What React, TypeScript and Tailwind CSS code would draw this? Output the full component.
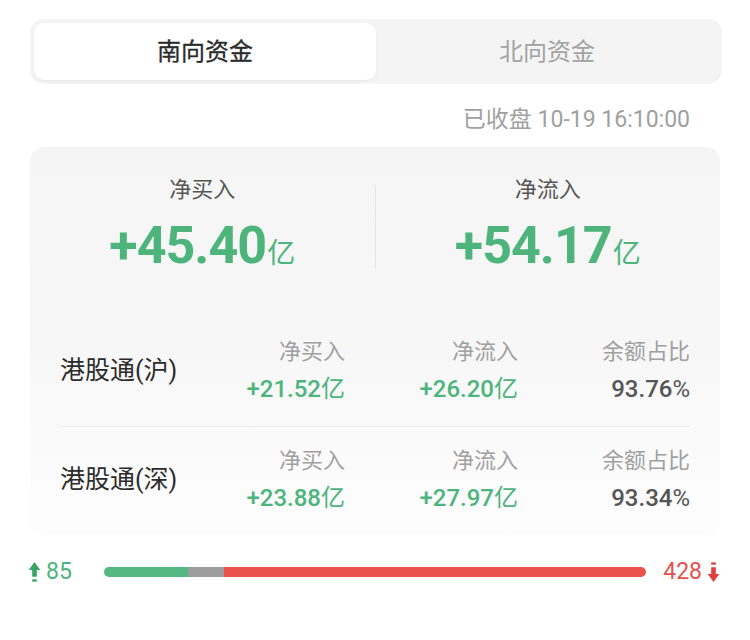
import React from 'react';

const cjk = "font-['Roboto','Noto_Sans_CJK_SC',sans-serif]";

const rows = [
  { name: '港股通(沪)', buy: '+21.52', flow: '+26.20', ratio: '93.76' },
  { name: '港股通(深)', buy: '+23.88', flow: '+27.97', ratio: '93.34' },
];

const UpArrow = () => (
  <svg width="13" height="22" viewBox="0 0 12 21" className="text-[#3aa366]">
    <path d="M6 1 L11.5 8.5 L8.2 8.5 L8.2 15 L3.8 15 L3.8 8.5 L0.5 8.5 Z" fill="currentColor" />
    <rect x="3.8" y="17.5" width="4.4" height="2.2" fill="currentColor" />
  </svg>
);

const DownArrow = () => (
  <svg width="13" height="22" viewBox="0 0 12 21" className="text-[#e23c3c]">
    <rect x="3.8" y="1.3" width="4.4" height="2.2" fill="currentColor" />
    <path d="M6 20 L11.5 12.5 L8.2 12.5 L8.2 6 L3.8 6 L3.8 12.5 L0.5 12.5 Z" fill="currentColor" />
  </svg>
);

export default function App() {
  return (
    <div className={`w-[750px] h-[640px] bg-white overflow-hidden ${cjk}`}>
      {/* Tabs */}
      <div className="ml-[30px] mr-[28px] mt-[19px] h-[65px] rounded-[14px] bg-[#f4f4f4] p-[4px] flex">
        <div className="flex-1 bg-white rounded-[10px] shadow-[0_1px_3px_rgba(0,0,0,0.06)] flex items-center justify-center text-[24px] text-[#2b2b2b] [-webkit-text-stroke:0.3px_#2b2b2b]">
          南向资金
        </div>
        <div className="flex-1 flex items-center justify-center text-[24px] text-[#a3a3a3]">
          北向资金
        </div>
      </div>

      {/* Timestamp */}
      <div className="mt-[22px] pr-[60px] text-right text-[23px] leading-[28px] text-[#a0a0a0]">
        已收盘 10-19 16:10:00
      </div>

      {/* Card */}
      <div className="mx-[30px] mt-[13px] rounded-[14px] bg-gradient-to-b from-[#f5f5f5] via-[#f7f7f7] to-[#fdfdfd]">
        {/* Summary */}
        <div className="flex pt-[29px] pb-[44px]">
          <div className="flex-1 flex flex-col items-center">
            <div className="text-[22px] leading-[28px] text-[#555]">净买入</div>
            <div className="mt-[14px] h-[56px] flex items-baseline text-[#4db47c]">
              <span className="text-[52px] leading-[56px] font-bold tracking-[-1px]">+45.40</span>
              <span className="text-[28px] ml-[1px]">亿</span>
            </div>
          </div>
          <div className="w-px bg-[#e4e4e4] mt-[9px] h-[83px]" />
          <div className="flex-1 flex flex-col items-center">
            <div className="text-[22px] leading-[28px] text-[#555]">净流入</div>
            <div className="mt-[14px] h-[56px] flex items-baseline text-[#4db47c]">
              <span className="text-[52px] leading-[56px] font-bold tracking-[-1px]">+54.17</span>
              <span className="text-[28px] ml-[1px]">亿</span>
            </div>
          </div>
        </div>

        {/* Rows */}
        <div className="px-[30px]">
          {rows.map((r, i) => (
            <div
              key={r.name}
              className={`grid grid-cols-[minmax(0,1fr)_172px_173px_172px] items-center pt-[20px] pb-[22px] ${i > 0 ? 'border-t border-[#ececec]' : ''}`}
            >
              <div className="text-[25px] text-[#2b2b2b] whitespace-nowrap">{r.name}</div>
              <div className="flex flex-col items-end">
                <div className="text-[22px] leading-[28px] text-[#a0a0a0]">净买入</div>
                <div className="mt-[8px] text-[24px] leading-[30px] font-medium text-[#4db47c]">
                  {r.buy}<span className="font-normal">亿</span>
                </div>
              </div>
              <div className="flex flex-col items-end">
                <div className="text-[22px] leading-[28px] text-[#a0a0a0]">净流入</div>
                <div className="mt-[8px] text-[24px] leading-[30px] font-medium text-[#4db47c]">
                  {r.flow}<span className="font-normal">亿</span>
                </div>
              </div>
              <div className="flex flex-col items-end">
                <div className="text-[22px] leading-[28px] text-[#a0a0a0]">余额占比</div>
                <div className="mt-[8px] text-[24px] leading-[30px] font-medium text-[#555]">
                  {r.ratio}<span className="font-normal">%</span>
                </div>
              </div>
            </div>
          ))}
        </div>
      </div>

      {/* Up/down bar */}
      <div className="mt-[25px] h-[24px] flex items-center pl-[28px] pr-[30px]">
        <div className="w-[76px] flex items-center gap-[5px] text-[#4db47c]">
          <UpArrow />
          <span className="text-[23px] leading-[24px]">85</span>
        </div>
        <div className="flex-1 h-[10px] rounded-full overflow-hidden flex">
          <div className="w-[84px] bg-[#55b882]" />
          <div className="w-[36px] bg-[#9c9c9c]" />
          <div className="flex-1 bg-[#ea524d]" />
        </div>
        <div className="w-[74px] flex items-center justify-end gap-[5px] text-[#e5524e]">
          <span className="text-[23px] leading-[24px]">428</span>
          <DownArrow />
        </div>
      </div>
    </div>
  );
}
